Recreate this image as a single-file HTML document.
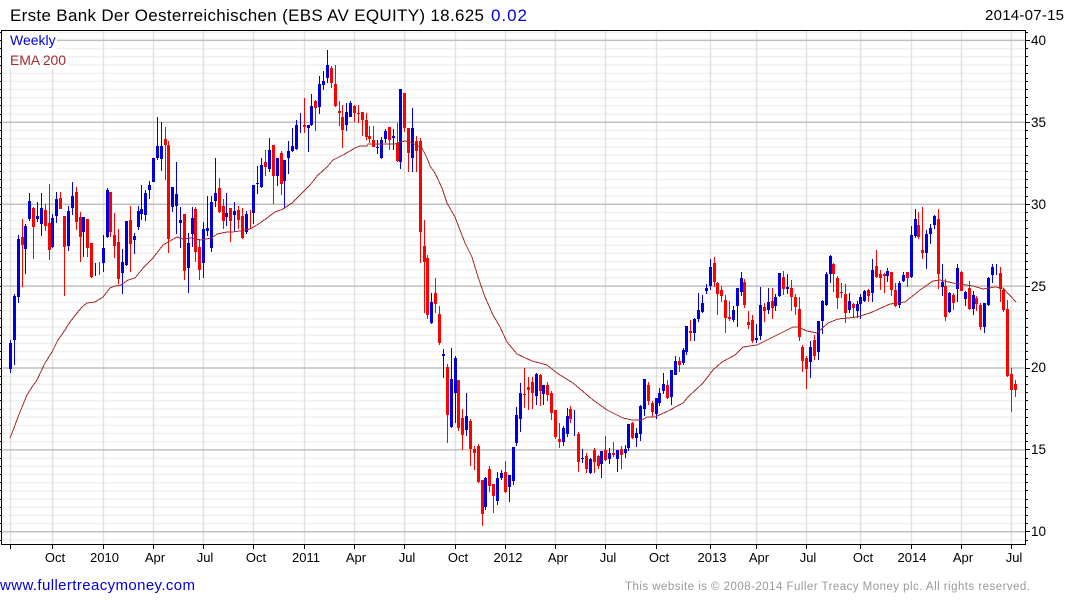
<!DOCTYPE html>
<html>
<head>
<meta charset="utf-8">
<title>Erste Bank Der Oesterreichischen</title>
<style>
html,body{margin:0;padding:0;background:#fff;width:1075px;height:600px;overflow:hidden}
svg{display:block;position:absolute;left:0;top:0}
text{font-family:"Liberation Sans",sans-serif}
</style>
</head>
<body>
<svg width="1075" height="600" viewBox="0 0 1075 600" xmlns="http://www.w3.org/2000/svg">
<rect width="1075" height="600" fill="#fff"/>
<!-- minor grid -->
<path fill="none" stroke="#f0f0f0" stroke-width="1.5" d="M2 32.2H1025M2 48.6H1025M2 56.8H1025M2 65H1025M2 73.2H1025M2 81.3H1025M2 89.5H1025M2 97.7H1025M2 105.9H1025M2 114.1H1025M2 130.5H1025M2 138.7H1025M2 146.9H1025M2 155.1H1025M2 163.3H1025M2 171.4H1025M2 179.6H1025M2 187.8H1025M2 196H1025M2 212.4H1025M2 220.6H1025M2 228.8H1025M2 237H1025M2 245.2H1025M2 253.3H1025M2 261.5H1025M2 269.7H1025M2 277.9H1025M2 294.3H1025M2 302.5H1025M2 310.7H1025M2 318.9H1025M2 327.1H1025M2 335.2H1025M2 343.4H1025M2 351.6H1025M2 359.8H1025M2 376.2H1025M2 384.4H1025M2 392.6H1025M2 400.8H1025M2 409H1025M2 417.1H1025M2 425.3H1025M2 433.5H1025M2 441.7H1025M2 458.1H1025M2 466.3H1025M2 474.5H1025M2 482.7H1025M2 490.9H1025M2 499H1025M2 507.2H1025M2 515.4H1025M2 523.6H1025M2 540H1025"/>
<!-- vertical grid -->
<path fill="none" stroke="#e0e0e0" stroke-width="1.4" d="M10.5 31V544M52.5 31V544M103.5 31V544M153.5 31V544M203.5 31V544M253.5 31V544M304.5 31V544M354.5 31V544M404.5 31V544M455.5 31V544M505.5 31V544M555.5 31V544M605.5 31V544M656.5 31V544M710.5 31V544M756.5 31V544M806.5 31V544M860.5 31V544M911.5 31V544M961.5 31V544M1011.5 31V544"/>
<!-- major grid -->
<path fill="none" stroke="#c0c0c0" stroke-width="1.5" d="M2 40.4H1025M2 122.3H1025M2 204.2H1025M2 286.1H1025M2 368H1025M2 449.9H1025M2 531.8H1025"/>
<!-- legend background -->
<rect x="2" y="31" width="55" height="18" fill="#fff"/>
<rect x="2" y="49" width="66" height="20" fill="#fff"/>
<!-- wicks -->
<path fill="none" stroke="#0000dc" stroke-width="1" shape-rendering="crispEdges" d="M10.5 340V373M14.5 294V365M18.5 235V303M25.5 224V274M29.5 193V221M37.5 202V222M41.5 193V236M52.5 214V248M56.5 192V223M68.5 206V251M72.5 182V215M83.5 217V257M95.5 263V276M103.5 235V272M107.5 188V238M122.5 249V294M126.5 221V266M134.5 233V254M138.5 206V230M141.5 185V220M145.5 190V221M149.5 181V199M153.5 158V182M157.5 117V160M161.5 122V171M172.5 187V212M176.5 162V234M180.5 207V248M188.5 233V293M192.5 207V247M203.5 222V278M207.5 196V236M211.5 196V252M215.5 158V207M226.5 193V226M234.5 202V231M246.5 211V234M253.5 185V224M257.5 166V194M261.5 158V188M269.5 138V172M277.5 158V186M284.5 160V208M288.5 141V174M292.5 128V152M296.5 120V150M300.5 113V133M308.5 126V152M311.5 94V126M319.5 76V114M323.5 71V90M327.5 50V83M346.5 103V131M350.5 101V117M377.5 140V154M381.5 137V159M385.5 129V143M393.5 129V150M400.5 89V169M412.5 108V172M431.5 293V324M443.5 349V378M451.5 348V428M455.5 356V423M466.5 393V436M485.5 477V510M497.5 472V505M501.5 470V480M509.5 475V502M513.5 447V485M516.5 407V446M520.5 383V432M536.5 373V405M543.5 385V405M563.5 426V446M567.5 408V437M574.5 410V436M582.5 449V463M590.5 458V474M601.5 451V478M609.5 448V464M617.5 450V472M625.5 445V458M628.5 424V451M636.5 428V447M640.5 405V441M644.5 379V416M656.5 398V419M659.5 388V406M663.5 373V394M671.5 370V405M675.5 356V375M683.5 348V365M686.5 326V355M694.5 318V341M698.5 293V322M702.5 295V313M706.5 284V294M710.5 259V290M733.5 306V322M737.5 288V327M741.5 272V296M756.5 324V343M760.5 287V340M768.5 288V314M775.5 294V311M779.5 273V297M787.5 274V294M810.5 341V378M818.5 321V360M822.5 300V334M826.5 272V306M830.5 255V283M849.5 293V313M857.5 301V318M860.5 294V319M864.5 290V302M872.5 259V302M887.5 268V282M899.5 281V308M903.5 272V282M911.5 226V278M915.5 209V238M926.5 230V269M930.5 224V244M934.5 215V229M942.5 264V296M949.5 292V313M957.5 264V302M965.5 291V306M973.5 291V315M984.5 303V333M988.5 277V306M992.5 264V283M996.5 264V275"/>
<path fill="none" stroke="#ff0000" stroke-width="1" shape-rendering="crispEdges" d="M22.5 219V287M33.5 207V259M45.5 204V231M49.5 184V260M60.5 192V209M64.5 216V296M76.5 187V230M80.5 212V262M87.5 219V257M91.5 243V278M99.5 262V275M110.5 192V237M114.5 213V258M118.5 229V284M130.5 206V272M165.5 127V180M168.5 141V253M184.5 214V280M195.5 207V262M199.5 239V280M219.5 178V213M223.5 199V229M230.5 208V242M238.5 206V229M242.5 208V239M250.5 210V229M265.5 150V176M273.5 145V204M281.5 151V195M304.5 98V133M315.5 100V131M331.5 66V88M335.5 65V107M339.5 101V126M342.5 105V148M354.5 105V122M358.5 105V123M362.5 112V136M366.5 113V140M369.5 126V143M373.5 126V147M389.5 127V150M397.5 123V162M404.5 93V132M408.5 128V172M416.5 136V172M420.5 138V263M424.5 220V313M427.5 255V319M435.5 278V313M439.5 306V345M447.5 364V443M458.5 380V431M462.5 409V450M470.5 419V466M474.5 446V470M478.5 444V483M482.5 480V526M489.5 466V492M493.5 484V513M505.5 461V493M524.5 368V408M528.5 377V410M532.5 377V409M540.5 374V406M547.5 382V401M551.5 391V420M555.5 410V439M559.5 423V448M570.5 406V423M578.5 432V472M586.5 453V473M594.5 448V473M598.5 455V469M605.5 436V461M613.5 442V457M621.5 446V469M632.5 422V439M648.5 382V405M652.5 401V417M667.5 380V399M679.5 357V372M690.5 320V341M714.5 257V287M717.5 282V315M721.5 286V302M725.5 295V333M729.5 301V321M744.5 279V308M748.5 311V329M752.5 315V343M764.5 303V322M772.5 288V319M783.5 271V295M791.5 280V311M795.5 294V315M799.5 297V341M802.5 345V372M806.5 356V389M814.5 335V360M833.5 263V292M837.5 276V309M841.5 283V298M845.5 284V323M853.5 303V317M868.5 289V302M876.5 250V278M880.5 270V290M884.5 273V293M891.5 272V296M895.5 283V307M907.5 272V287M918.5 212V239M922.5 207V259M938.5 209V289M945.5 279V321M953.5 293V310M961.5 271V291M969.5 281V310M976.5 296V311M980.5 303V330M1000.5 267V302M1003.5 288V312M1007.5 300V377M1011.5 368V412M1015.5 380V397"/>
<!-- bodies -->
<path fill="none" stroke="#ff0000" stroke-width="3" shape-rendering="crispEdges" d="M22.5 237V245M33.5 208V227M45.5 210V226M49.5 223V250M60.5 198V209M64.5 216V247M76.5 192V222M80.5 217V237M87.5 219V248M91.5 243V277M110.5 192V232M114.5 235V246M118.5 242V279M130.5 220V244M165.5 139V145M168.5 145V239M184.5 214V271M195.5 209V252M199.5 247V270M219.5 188V212M223.5 206V221M230.5 208V221M238.5 210V220M242.5 216V238M265.5 162V167M273.5 145V176M281.5 153V184M304.5 125V127M315.5 101V108M331.5 68V83M335.5 84V106M339.5 111V113M342.5 117V130M354.5 106V113M358.5 113V114M362.5 112V120M366.5 120V137M369.5 136V139M373.5 140V147M389.5 127V140M397.5 143V161M404.5 93V128M408.5 128V153M416.5 141V151M420.5 141V232M424.5 246V262M427.5 258V315M435.5 293V304M439.5 314V343M447.5 367V415M458.5 380V428M462.5 418V435M470.5 421V449M474.5 449V453M478.5 446V482M482.5 480V514M489.5 469V486M493.5 484V496M505.5 472V492M524.5 394V395M528.5 387V390M532.5 382V393M540.5 375V391M547.5 385V395M551.5 393V413M555.5 410V437M559.5 439V442M570.5 409V419M578.5 434V462M586.5 456V469M594.5 450V462M598.5 456V466M605.5 450V460M613.5 453V455M621.5 449V455M632.5 423V438M648.5 385V401M652.5 403V412M667.5 385V398M679.5 361V365M690.5 331V333M714.5 263V282M717.5 283V294M721.5 290V296M725.5 300V318M729.5 317V319M744.5 282V305M748.5 322V325M752.5 320V341M764.5 307V311M772.5 301V308M783.5 277V289M791.5 288V297M795.5 297V307M799.5 309V337M802.5 347V361M806.5 358V369M814.5 340V356M833.5 264V274M837.5 278V298M841.5 292V293M845.5 294V313M853.5 304V308M868.5 290V296M876.5 266V277M880.5 274V278M884.5 274V276M891.5 272V290M895.5 290V306M907.5 272V278M918.5 225V237M922.5 250V253M938.5 219V274M945.5 286V317M953.5 295V303M961.5 272V291M969.5 288V309M976.5 298V304M980.5 305V327M1000.5 273V289M1003.5 290V310M1007.5 309V376M1011.5 374V390M1015.5 384V390"/>
<path fill="none" stroke="#0000dc" stroke-width="3" shape-rendering="crispEdges" d="M10.5 343V369M14.5 296V340M18.5 239V297M25.5 226V249M29.5 201V219M37.5 216V219M41.5 208V224M52.5 218V247M56.5 199V216M68.5 211V246M72.5 196V208M83.5 217V232M103.5 248V263M107.5 190V237M122.5 262V273M126.5 221V265M134.5 236V240M138.5 211V227M141.5 209V214M145.5 193V215M149.5 185V190M153.5 158V182M157.5 146V158M161.5 146V159M172.5 187V207M176.5 194V206M180.5 220V223M188.5 243V268M192.5 218V234M203.5 229V263M207.5 228V231M211.5 202V248M215.5 193V201M226.5 213V217M234.5 211V215M246.5 214V232M253.5 185V213M257.5 183V184M261.5 165V187M269.5 150V169M277.5 158V176M284.5 160V181M288.5 151V158M292.5 146V151M296.5 125V149M308.5 125V128M311.5 106V125M319.5 84V107M323.5 81V85M327.5 65V78M346.5 112V125M350.5 103V117M377.5 147V148M381.5 140V158M385.5 131V139M393.5 136V138M400.5 89V162M412.5 128V158M431.5 302V323M443.5 354V356M451.5 379V427M455.5 358V393M466.5 416V430M485.5 478V507M497.5 478V501M501.5 473V478M509.5 475V487M513.5 447V481M516.5 415V443M520.5 393V419M536.5 374V396M543.5 385V394M563.5 428V442M567.5 416V434M582.5 458V459M590.5 459V473M601.5 451V464M609.5 453V459M617.5 450V459M625.5 449V453M628.5 424V448M636.5 433V438M640.5 406V434M644.5 379V409M656.5 398V414M659.5 393V403M663.5 384V391M671.5 370V397M675.5 361V375M683.5 350V363M686.5 326V352M694.5 319V333M698.5 310V319M702.5 303V312M706.5 288V291M710.5 267V286M733.5 310V320M737.5 288V306M741.5 278V292M756.5 338V340M760.5 305V336M768.5 302V310M775.5 297V306M779.5 273V296M787.5 287V289M810.5 347V362M818.5 321V352M822.5 301V321M826.5 274V305M830.5 256V274M849.5 301V310M857.5 304V311M860.5 297V304M864.5 291V301M872.5 270V293M887.5 271V276M899.5 283V305M903.5 275V281M911.5 235V277M915.5 219V236M926.5 234V253M930.5 228V234M934.5 216V225M942.5 282V287M949.5 293V312M957.5 268V289M965.5 292V299M973.5 295V309M984.5 303V327M988.5 278V305M992.5 267V275"/>
<!-- EMA -->
<polyline fill="none" stroke="#a52a2a" stroke-width="1" shape-rendering="crispEdges" points="10,438 14,428 18,417 22,407 27,395 32,387 37,380 45,363 52,352 58,340 63,333 70,322 77,313 82,307 87,303 95,302 103,297 110,288 115,286 121,285 128,280 135,278 143,268 153,258 163,245 170,241 177,237 183,239 192,238 200,240 212,238 217,234 227,232 232,232 240,231 250,229 257,225 267,218 275,212 283,209 292,203 302,193 310,185 318,175 327,167 333,160 343,155 355,148 360,146 367,146 368,144 395,144 400,142 405,141 410,142 422,148 427,158 430,166 435,173 442,188 447,203 455,217 460,230 465,243 472,257 478,277 485,297 493,315 500,327 507,342 517,354 532,361 547,365 557,373 573,383 593,400 607,410 623,418 632,420 642,420 647,417 655,417 668,411 683,403 688,397 703,383 713,370 722,362 735,355 743,347 757,345 777,335 793,327 798,327 807,331 817,333 828,323 838,319 857,317 870,313 890,304 905,302 920,290 933,281 940,280 953,283 973,286 983,289 995,287 1003,288 1016,302"/>
<!-- frame -->
<path fill="none" stroke="#000" stroke-width="1" shape-rendering="crispEdges" d="M1.5 30.5H1025.5V544.5H1.5Z"/>
<!-- left ticks -->
<path fill="none" stroke="#000" stroke-width="1" shape-rendering="crispEdges" d="M0 32.5H2M0 40.5H2M0 48.5H2M0 56.5H2M0 65.5H2M0 73.5H2M0 81.5H2M0 89.5H2M0 97.5H2M0 105.5H2M0 114.5H2M0 122.5H2M0 130.5H2M0 138.5H2M0 146.5H2M0 155.5H2M0 163.5H2M0 171.5H2M0 179.5H2M0 187.5H2M0 196.5H2M0 204.5H2M0 212.5H2M0 220.5H2M0 228.5H2M0 237.5H2M0 245.5H2M0 253.5H2M0 261.5H2M0 269.5H2M0 277.5H2M0 286.5H2M0 294.5H2M0 302.5H2M0 310.5H2M0 318.5H2M0 327.5H2M0 335.5H2M0 343.5H2M0 351.5H2M0 359.5H2M0 368.5H2M0 376.5H2M0 384.5H2M0 392.5H2M0 400.5H2M0 409.5H2M0 417.5H2M0 425.5H2M0 433.5H2M0 441.5H2M0 449.5H2M0 458.5H2M0 466.5H2M0 474.5H2M0 482.5H2M0 490.5H2M0 499.5H2M0 507.5H2M0 515.5H2M0 523.5H2M0 531.5H2M0 540.5H2"/>
<!-- right ticks -->
<path fill="none" stroke="#000" stroke-width="1" shape-rendering="crispEdges" d="M1026 40.5H1030M1026 122.5H1030M1026 204.5H1030M1026 286.5H1030M1026 368.5H1030M1026 449.5H1030M1026 531.5H1030M1026 32.5H1028M1026 48.5H1028M1026 56.5H1028M1026 65.5H1028M1026 73.5H1028M1026 81.5H1028M1026 89.5H1028M1026 97.5H1028M1026 105.5H1028M1026 114.5H1028M1026 130.5H1028M1026 138.5H1028M1026 146.5H1028M1026 155.5H1028M1026 163.5H1028M1026 171.5H1028M1026 179.5H1028M1026 187.5H1028M1026 196.5H1028M1026 212.5H1028M1026 220.5H1028M1026 228.5H1028M1026 237.5H1028M1026 245.5H1028M1026 253.5H1028M1026 261.5H1028M1026 269.5H1028M1026 277.5H1028M1026 294.5H1028M1026 302.5H1028M1026 310.5H1028M1026 318.5H1028M1026 327.5H1028M1026 335.5H1028M1026 343.5H1028M1026 351.5H1028M1026 359.5H1028M1026 376.5H1028M1026 384.5H1028M1026 392.5H1028M1026 400.5H1028M1026 409.5H1028M1026 417.5H1028M1026 425.5H1028M1026 433.5H1028M1026 441.5H1028M1026 458.5H1028M1026 466.5H1028M1026 474.5H1028M1026 482.5H1028M1026 490.5H1028M1026 499.5H1028M1026 507.5H1028M1026 515.5H1028M1026 523.5H1028M1026 540.5H1028"/>
<!-- bottom ticks -->
<path fill="none" stroke="#000" stroke-width="1" shape-rendering="crispEdges" d="M10.5 545V549M52.5 545V549M103.5 545V549M153.5 545V549M203.5 545V549M253.5 545V549M304.5 545V549M354.5 545V549M404.5 545V549M455.5 545V549M505.5 545V549M555.5 545V549M605.5 545V549M656.5 545V549M710.5 545V549M756.5 545V549M806.5 545V549M860.5 545V549M911.5 545V549M961.5 545V549M1011.5 545V549"/>
<!-- title -->
<text x="10" y="21" font-size="17" fill="#000" textLength="474" lengthAdjust="spacing">Erste Bank Der Oesterreichischen (EBS AV EQUITY) 18.625</text>
<text x="491" y="21" font-size="17" fill="#0000dc" textLength="36" lengthAdjust="spacing">0.02</text>
<text x="985" y="20" font-size="15" fill="#000" textLength="79" lengthAdjust="spacing">2014-07-15</text>
<!-- legend -->
<text x="10" y="45" font-size="14" fill="#0000dc">Weekly</text>
<text x="10" y="65" font-size="14" fill="#a52a2a" textLength="56" lengthAdjust="spacing">EMA 200</text>
<!-- y labels -->
<g font-size="13.5" fill="#000">
<text x="1031" y="45">40</text>
<text x="1031" y="127">35</text>
<text x="1031" y="209">30</text>
<text x="1031" y="291">25</text>
<text x="1031" y="372">20</text>
<text x="1031" y="454">15</text>
<text x="1031" y="536">10</text>
</g>
<!-- x labels -->
<g font-size="13" fill="#000" text-anchor="middle">
<text x="55" y="562">Oct</text>
<text x="104.5" y="562">2010</text>
<text x="155" y="562">Apr</text>
<text x="205" y="562">Jul</text>
<text x="256" y="562">Oct</text>
<text x="306" y="562">2011</text>
<text x="356" y="562">Apr</text>
<text x="407" y="562">Jul</text>
<text x="458" y="562">Oct</text>
<text x="508" y="562">2012</text>
<text x="558" y="562">Apr</text>
<text x="608" y="562">Jul</text>
<text x="659" y="562">Oct</text>
<text x="712" y="562">2013</text>
<text x="759" y="562">Apr</text>
<text x="808" y="562">Jul</text>
<text x="863" y="562">Oct</text>
<text x="912" y="562">2014</text>
<text x="963" y="562">Apr</text>
<text x="1014" y="562">Jul</text>
</g>
<!-- footer -->
<text x="0" y="590" font-size="15" fill="#0000e0" textLength="195" lengthAdjust="spacing">www.fullertreacymoney.com</text>
<text x="625" y="590" font-size="11.5" fill="#999" textLength="405" lengthAdjust="spacing">This website is © 2008-2014 Fuller Treacy Money plc. All rights reserved.</text>
</svg>
</body>
</html>
